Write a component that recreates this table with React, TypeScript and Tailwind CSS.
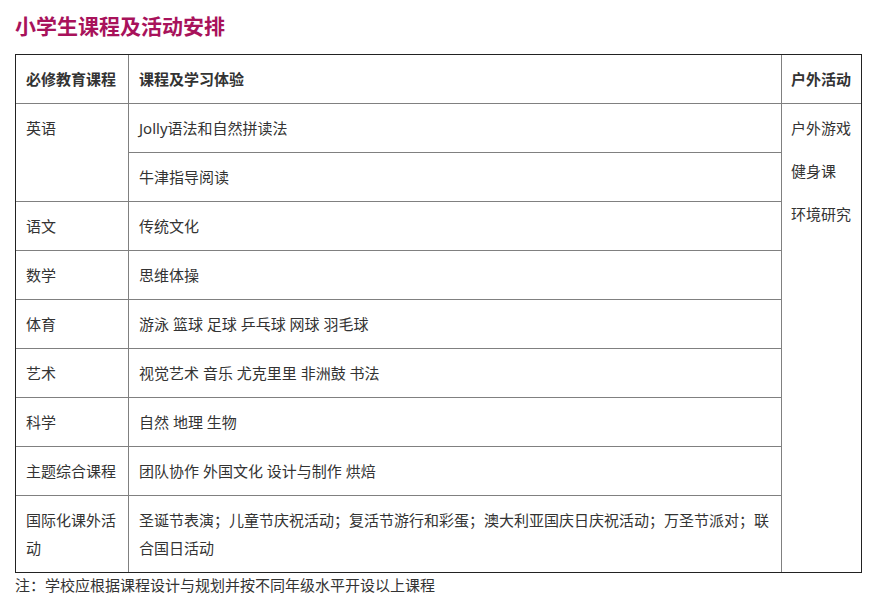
const rows: { subject: string; items: string[] }[] = [
  { subject: '英语', items: ['Jolly语法和自然拼读法', '牛津指导阅读'] },
  { subject: '语文', items: ['传统文化'] },
  { subject: '数学', items: ['思维体操'] },
  { subject: '体育', items: ['游泳 篮球 足球 乒乓球 网球 羽毛球'] },
  { subject: '艺术', items: ['视觉艺术 音乐 尤克里里 非洲鼓 书法'] },
  { subject: '科学', items: ['自然 地理 生物'] },
  { subject: '主题综合课程', items: ['团队协作 外国文化 设计与制作 烘焙'] },
  {
    subject: '国际化课外活动',
    items: ['圣诞节表演；儿童节庆祝活动；复活节游行和彩蛋；澳大利亚国庆日庆祝活动；万圣节派对；联合国日活动'],
  },
];

const outdoor = ['户外游戏', '健身课', '环境研究'];

const cell = 'border-t border-[#808080] px-[10px] py-[10px] align-top leading-[28px]';

function App() {
  return (
    <div
      className="min-h-screen bg-white text-[15px] text-[#333]"
      style={{ fontFamily: '"Noto Sans", "Noto Sans CJK SC", sans-serif' }}>
      <div className="px-[15px] pt-[10px]">
        <h2 className="text-[21px] font-bold leading-[32px] text-[#a8125b]">小学生课程及活动安排</h2>
        <div className="mt-[12px] w-[847px] border border-[#222]">
          <table className="w-full table-fixed border-separate border-spacing-0">
            <colgroup>
              <col className="w-[112px]" />
              <col className="w-[653px]" />
              <col />
            </colgroup>
            <thead>
              <tr>
                <th className="px-[10px] py-[10px] text-left font-bold leading-[28px]">必修教育课程</th>
                <th className="border-l border-[#808080] px-[10px] py-[10px] text-left font-bold leading-[28px]">
                  课程及学习体验
                </th>
                <th className="border-l border-[#808080] px-[9px] py-[10px] text-left font-bold leading-[28px]">
                  户外活动
                </th>
              </tr>
            </thead>
            <tbody>
              {rows.flatMap((row, i) =>
                row.items.map((item, j) => (
                  <tr key={`${i}-${j}`}>
                    {j === 0 && (
                      <td rowSpan={row.items.length} className={cell}>
                        {row.subject}
                      </td>
                    )}
                    <td className={`${cell} border-l`}>{item}</td>
                    {i === 0 && j === 0 && (
                      <td rowSpan={9} className={`${cell} border-l !px-[9px]`}>
                        <div className="flex flex-col gap-[15px]">
                          {outdoor.map((o) => (
                            <p key={o}>{o}</p>
                          ))}
                        </div>
                      </td>
                    )}
                  </tr>
                )),
              )}
            </tbody>
          </table>
        </div>
        <p className="leading-[24px]">注：学校应根据课程设计与规划并按不同年级水平开设以上课程</p>
      </div>
    </div>
  );
}

export default App;
